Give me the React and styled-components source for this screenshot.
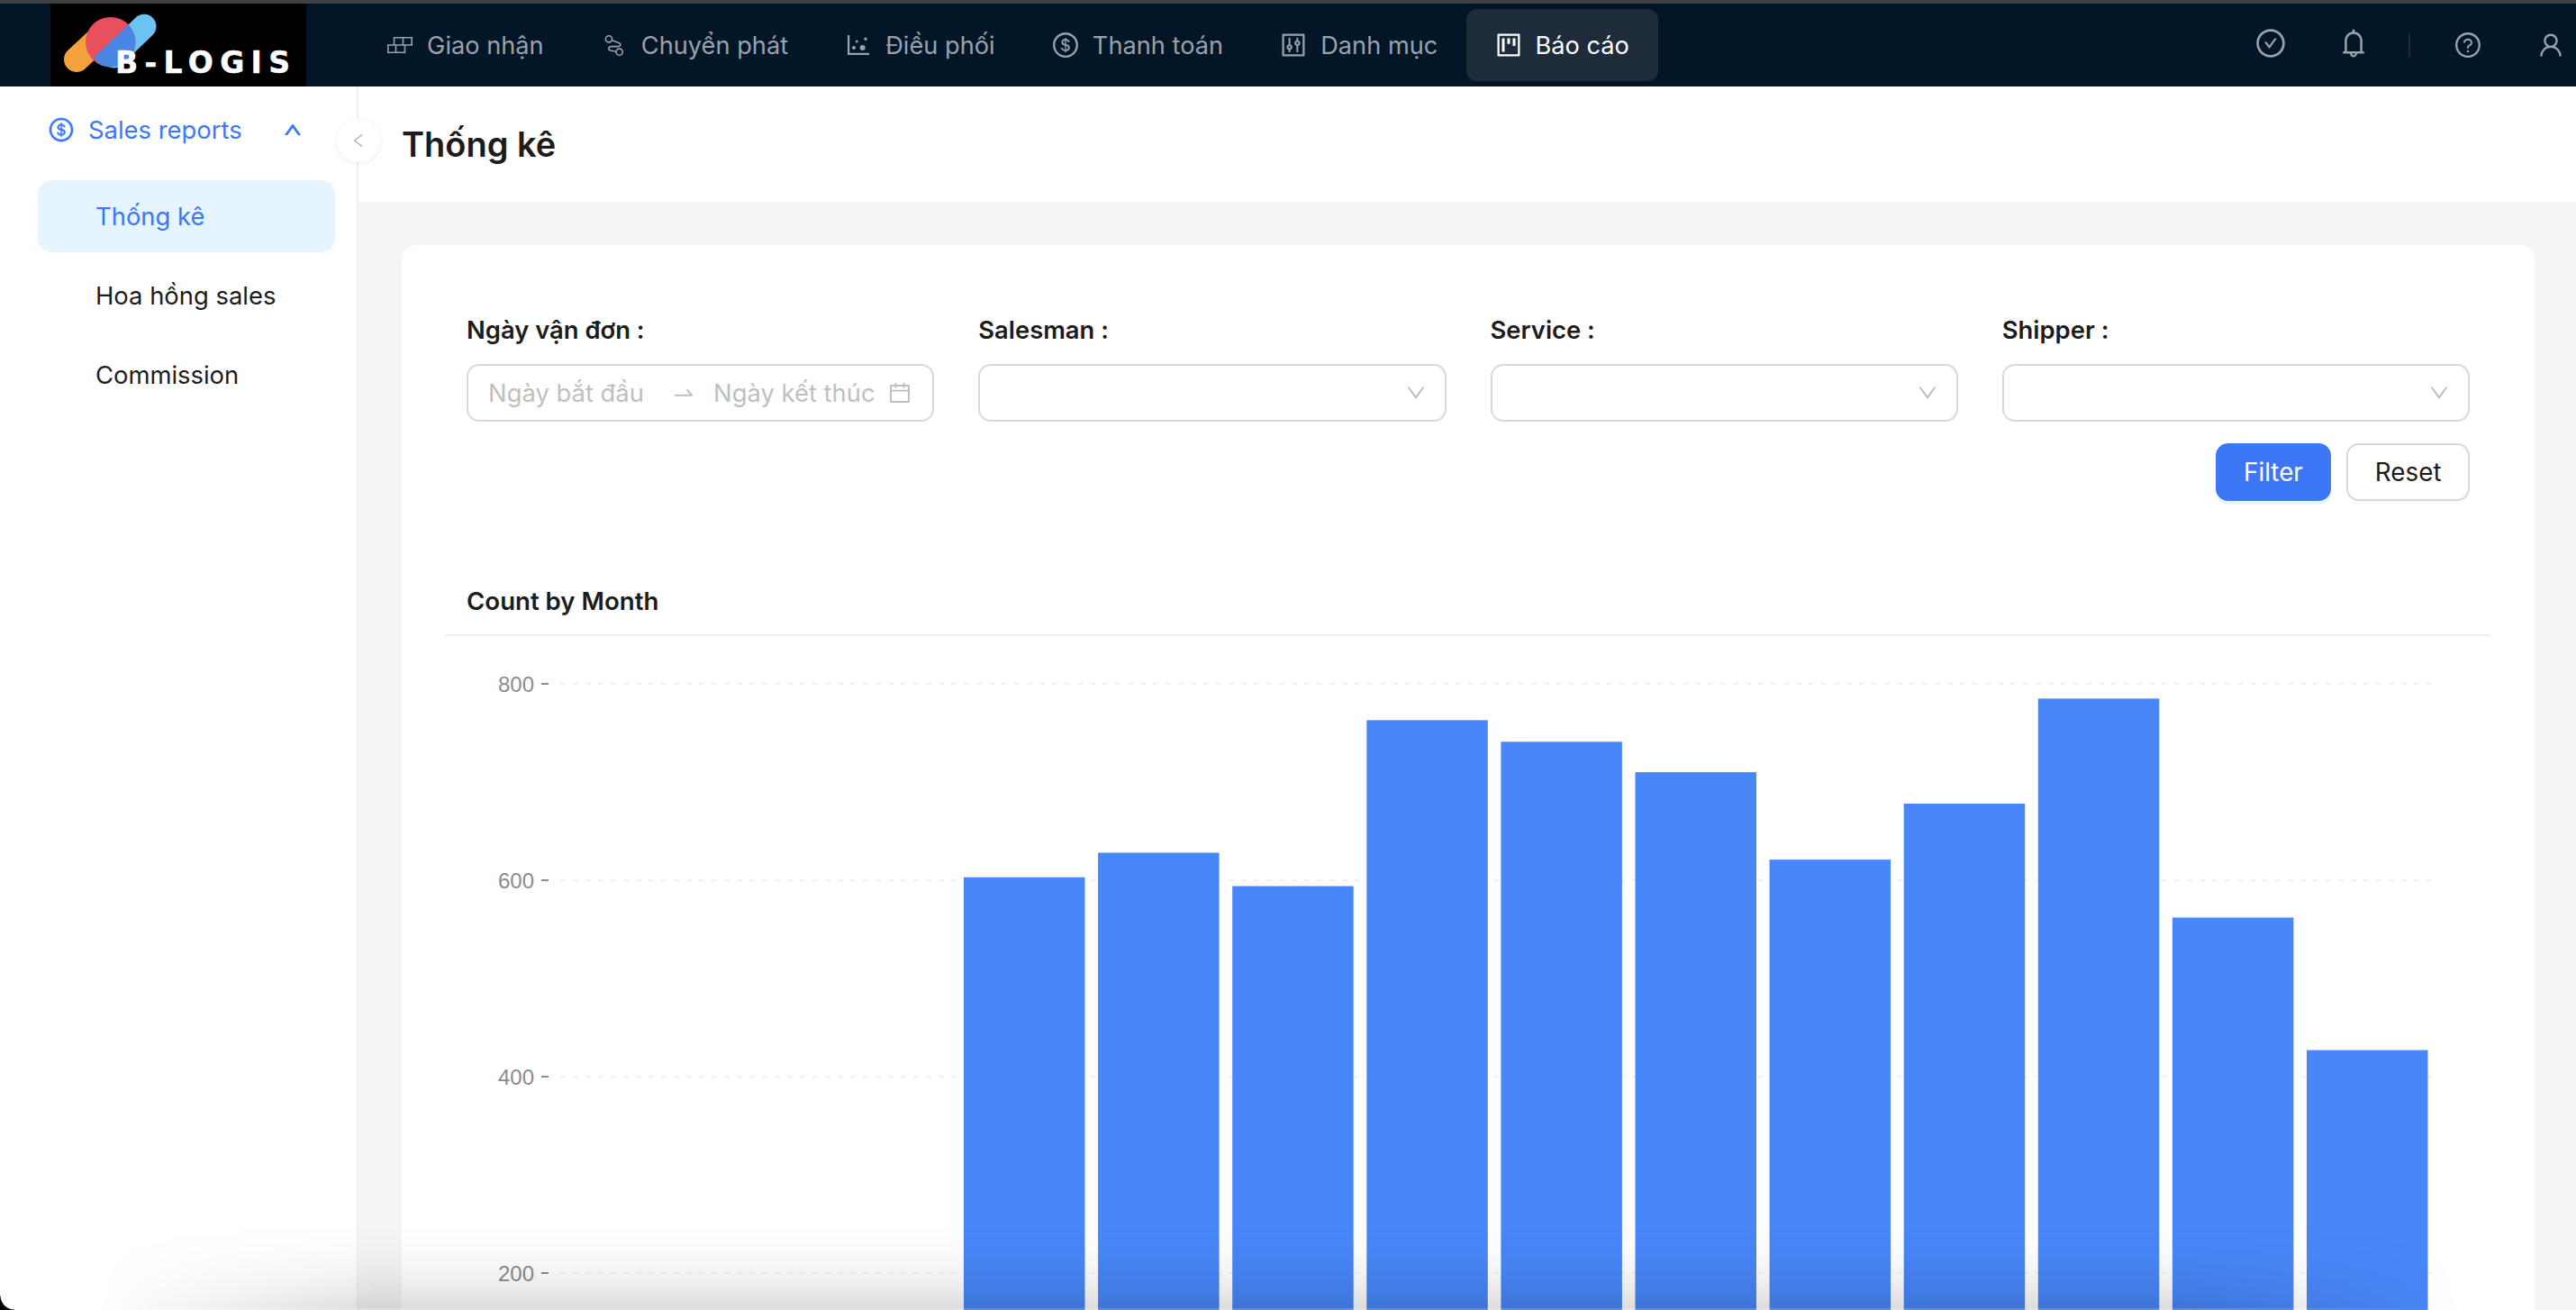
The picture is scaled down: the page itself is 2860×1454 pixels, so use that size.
import React from 'react';
import styled, { createGlobalStyle } from 'styled-components';
import {
  AiOutlineDotChart,
  AiOutlineDollar,
  AiOutlineControl,
  AiOutlineProject,
  AiOutlineCheckCircle,
  AiOutlineBell,
  AiOutlineQuestionCircle,
  AiOutlineUser,
  AiOutlineUp,
  AiOutlineLeft,
  AiOutlineDown,
  AiOutlineCalendar,
  AiOutlineSwapRight,
} from 'react-icons/ai';

const GlobalStyle = createGlobalStyle`
  html, body {
    margin: 0;
    padding: 0;
    height: 100%;
    overflow: hidden;
    background: #fff;
    font-family: Inter, "Noto Sans", sans-serif;
  }
  * { box-sizing: border-box; }
`;

const Page = styled.div`
  position: relative;
  display: flex;
  flex-direction: column;
  height: 1454px;
  overflow: hidden;
`;

const TopStrip = styled.div`
  height: 4px;
  flex: none;
  background: #3f4143;
`;

// Top navigation
const Header = styled.header`
  display: flex;
  align-items: center;
  flex: none;
  height: 92px;
  padding: 0 12px 0 56px;
  background: #031628;
`;

const LogoBox = styled.div`
  width: 284px;
  height: 92px;
  flex: none;
  margin-right: 58px;
  background: #000;

  svg { display: block; }
`;

const NavItem = styled.div`
  display: flex;
  align-items: center;
  gap: 16px;
  height: 80px;
  padding: 0 32.1px;
  border-radius: 12px;
  font-size: 27.2px;
  color: ${props => (props.$active ? '#fff' : '#9aa1ab')};
  background: ${props => (props.$active ? '#1e2b3b' : 'transparent')};
`;

const NavIcon = styled.span`
  display: flex;
  align-items: center;
  justify-content: center;
  width: 28px;
  height: 28px;
  font-size: 32px;

  svg { flex: none; }
`;

const RightIcons = styled.div`
  display: flex;
  align-items: center;
  margin-left: auto;
`;

const TopIcon = styled.span`
  display: flex;
  color: #9aa1ab;
  font-size: ${props => props.$size}px;
  margin-left: ${props => props.$gap}px;
  margin-bottom: ${props => props.$lift || 0}px;
`;

const HeaderDivider = styled.span`
  width: 2px;
  height: 26px;
  margin: 0 48px 0 43px;
  background: #1c2a3a;
`;

// Left menu
const Body = styled.div`
  display: flex;
  flex: 1;
  min-height: 0;
`;

const Sidebar = styled.aside`
  position: relative;
  flex: none;
  width: 398px;
  padding: 8px 24px 0 42px;
  border-right: 2px solid #f0f0f0;
  background: #fff;
`;

const SubMenuTitle = styled.div`
  display: flex;
  align-items: center;
  height: 80px;
  padding: 0 36px 0 12px;
  margin-bottom: 16px;
  font-size: 27.4px;
  color: #3c77f7;

  span { margin-left: 15px; }
  svg:last-child { margin-left: auto; font-size: 22px; stroke: currentColor; stroke-width: 50; }
  svg:first-child { font-size: 30px; margin-left: -1px; stroke: currentColor; stroke-width: 16; }
`;

const MenuItem = styled.div`
  display: flex;
  align-items: center;
  height: 80px;
  margin-bottom: 8px;
  padding-left: 64px;
  border-radius: 16px;
  font-size: 27.4px;
  color: ${props => (props.$active ? '#3c77f7' : '#1c1c1c')};
  background: ${props => (props.$active ? '#e6f4ff' : 'transparent')};
`;

const CollapseButton = styled.button`
  position: absolute;
  top: 36px;
  right: -26px;
  display: flex;
  align-items: center;
  justify-content: center;
  width: 48px;
  height: 48px;
  padding: 0;
  border: none;
  border-radius: 50%;
  background: #fff;
  color: #b8b8b8;
  font-size: 20px;
  box-shadow: 0 1px 6px rgba(0, 0, 0, 0.08);
`;

// Main area
const Main = styled.main`
  display: flex;
  flex-direction: column;
  flex: 1;
  min-width: 0;
  background: #f5f5f5;
`;

const TitleBar = styled.div`
  display: flex;
  align-items: center;
  flex: none;
  height: 128px;
  padding: 0 48px;
  background: #fff;
`;

const Title = styled.h1`
  margin: 0;
  font-size: 38px;
  font-weight: 600;
  color: #1c1c1c;
`;

const Content = styled.div`
  flex: 1;
  padding: 48px 46px 0 48px;
`;

const Card = styled.section`
  height: 100%;
  padding: 72px 72px 0;
  border-radius: 16px 16px 0 0;
  background: #fff;
  overflow: hidden;
`;

const FilterGrid = styled.div`
  display: grid;
  grid-template-columns: repeat(4, 1fr);
  column-gap: 49px;
`;

const Field = styled.div`
  display: flex;
  flex-direction: column;
`;

const Label = styled.label`
  height: 44px;
  margin-bottom: 16px;
  font-size: 27.4px;
  font-weight: 600;
  line-height: 44px;
  color: #1c1c1c;
`;

const InputBox = styled.div`
  display: flex;
  align-items: center;
  height: 64px;
  padding: 0 ${props => props.$right || 19}px 0 22px;
  border: 2px solid #d9d9d9;
  border-radius: 14px;
  background: #fff;
  color: #bfbfbf;
  font-size: 27.4px;
`;

const Placeholder = styled.span`
  width: 172px;
  white-space: nowrap;
  color: #bfbfbf;
`;

const RangeArrow = styled.span`
  display: flex;
  margin: 0 19px 0 31px;
  font-size: 28px;
`;

const FieldIcon = styled.span`
  display: flex;
  margin-left: auto;
  font-size: ${props => props.$size || 28}px;
`;

const ButtonRow = styled.div`
  display: flex;
  justify-content: flex-end;
  gap: 17px;
  margin-top: 24px;
`;

const Button = styled.button`
  height: 64px;
  padding: 0 ${props => (props.$primary ? 31.5 : 29.5)}px;
  border: ${props => (props.$primary ? 'none' : '2px solid #d9d9d9')};
  border-radius: 14px;
  font-family: inherit;
  font-size: 27.8px;
  color: ${props => (props.$primary ? '#fff' : '#1c1c1c')};
  background: ${props => (props.$primary ? '#3c77f7' : '#fff')};
  box-shadow: 0 4px 0 ${props => (props.$primary ? 'rgba(5, 145, 255, 0.1)' : 'rgba(0, 0, 0, 0.02)')};
`;

const ChartHead = styled.div`
  height: 76px;
  margin: 74px -24px 0;
  padding: 0 24px;
  border-bottom: 2px solid #f0f0f0;
  font-size: 27.6px;
  font-weight: 600;
  line-height: 74px;
  color: #1c1c1c;
`;

const ChartArea = styled.div`
  margin: 0 -24px;
  svg { display: block; }
`;

// Screenshot edge of the window
const WindowShadow = styled.div`
  position: absolute;
  left: 0;
  right: 0;
  bottom: 0;
  height: 95px;
  pointer-events: none;
  background: linear-gradient(
    to top,
    rgba(0, 0, 0, 0.14),
    rgba(0, 0, 0, 0.09) 20%,
    rgba(0, 0, 0, 0.04) 48%,
    rgba(0, 0, 0, 0.012) 75%,
    rgba(0, 0, 0, 0)
  );
  mask-image: linear-gradient(to right, transparent 110px, #000 420px, #000 2420px, transparent 2730px);

  &::after {
    content: '';
    position: absolute;
    left: 0;
    right: 0;
    bottom: 0;
    height: 2px;
    background: rgba(255, 255, 255, 0.18);
  }
`;

const WindowCorner = styled.div`
  position: absolute;
  left: 0;
  bottom: 0;
  width: 16px;
  height: 16px;
  pointer-events: none;
  background: radial-gradient(circle at 100% 0, transparent 15px, #000 16px);
`;

function BuildIcon() {
  return (
    <svg width="28" height="18" viewBox="0 0 28 18" fill="none" stroke="currentColor" strokeWidth="1.6">
      <path d="M7.5 9V.8h19.7V9H.8v8.2h18.7V9M17.5.8V9M9.5 9v8.2" />
    </svg>
  );
}

function RouteIcon() {
  return (
    <svg width="28" height="28" viewBox="0 0 28 28" fill="none" stroke="currentColor" strokeWidth="1.6">
      <circle cx="8" cy="7.3" r="3.6" />
      <circle cx="19.7" cy="21.7" r="3.6" />
      <path d="M11.3 8.8 19 11.4c3 1.2 2.2 4.2-.8 4.2h-7.4c-3.5 0-3.9 3.6-1 4.4l6.3 1.3" />
    </svg>
  );
}

function Logo() {
  return (
    <svg width="284" height="92" viewBox="0 0 284 92">
      <defs>
        <clipPath id="logoDisc">
          <circle cx="66.7" cy="42.7" r="27.7" />
        </clipPath>
      </defs>
      <line x1="29" y1="62" x2="57" y2="36" stroke="#f2a13c" strokeWidth="28" strokeLinecap="round" />
      <line x1="104" y1="25.3" x2="70" y2="58" stroke="#6cc3f2" strokeWidth="27" strokeLinecap="round" />
      <circle cx="66.7" cy="42.7" r="27.7" fill="#e8505d" />
      <line
        x1="104"
        y1="25.3"
        x2="57"
        y2="70"
        stroke="#4985e3"
        strokeWidth="27"
        strokeLinecap="butt"
        clipPath="url(#logoDisc)"
      />
      <text
        x="72"
        y="77"
        fontFamily="DejaVu Sans, sans-serif"
        fontWeight="700"
        fontSize="33"
        fill="#fff"
        stroke="#fff"
        strokeWidth="0.5"
        textLength="194"
        lengthAdjust="spacing"
      >
        B-LOGIS
      </text>
    </svg>
  );
}

const navItems = [
  { label: 'Giao nhận', icon: <BuildIcon /> },
  { label: 'Chuyển phát', icon: <RouteIcon /> },
  { label: 'Điều phối', icon: <AiOutlineDotChart /> },
  { label: 'Thanh toán', icon: <AiOutlineDollar /> },
  { label: 'Danh mục', icon: <AiOutlineControl /> },
  { label: 'Báo cáo', icon: <AiOutlineProject />, active: true },
];

const selectFields = ['Salesman', 'Service', 'Shipper'];

const monthCounts = [603, 628, 594, 763, 741, 710, 621, 678, 785, 562, 427];
const ticks = [800, 600, 400, 200];

const CHART_BASE = 925;
const UNIT = 1.09;

function CountChart() {
  return (
    <svg width="2272" height="760" viewBox="0 0 2272 760">
      {ticks.map(tick => {
        const y = CHART_BASE - tick * UNIT;
        return (
          <g key={tick}>
            <text
              x="99"
              y={y + 8.5}
              textAnchor="end"
              fontFamily="Liberation Sans, sans-serif"
              fontSize="24"
              fill="#8c8c8c"
            >
              {tick}
            </text>
            <line x1="107" x2="115" y1={y} y2={y} stroke="#8c8c8c" strokeWidth="2" />
            <line x1="128" x2="2206" y1={y} y2={y} stroke="#f1f1f1" strokeWidth="2" strokeDasharray="6 8" />
          </g>
        );
      })}
      {monthCounts.map((count, i) => (
        <rect
          key={i}
          x={576 + i * 149.1}
          y={CHART_BASE - count * UNIT}
          width="134.5"
          height={count * UNIT}
          fill="#4887f9"
        />
      ))}
    </svg>
  );
}

export default function App() {
  return (
    <Page>
      <GlobalStyle />
      <TopStrip />
      <Header>
        <LogoBox>
          <Logo />
        </LogoBox>
        {navItems.map(item => (
          <NavItem key={item.label} $active={item.active}>
            <NavIcon>{item.icon}</NavIcon>
            {item.label}
          </NavItem>
        ))}
        <RightIcons>
          <TopIcon $size={36} $lift={5}><AiOutlineCheckCircle /></TopIcon>
          <TopIcon $size={36} $gap={56} $lift={5}><AiOutlineBell /></TopIcon>
          <HeaderDivider />
          <TopIcon $size={32}><AiOutlineQuestionCircle /></TopIcon>
          <TopIcon $size={32} $gap={60}><AiOutlineUser /></TopIcon>
        </RightIcons>
      </Header>
      <Body>
        <Sidebar>
          <SubMenuTitle>
            <AiOutlineDollar />
            <span>Sales reports</span>
            <AiOutlineUp />
          </SubMenuTitle>
          <MenuItem $active>Thống kê</MenuItem>
          <MenuItem>Hoa hồng sales</MenuItem>
          <MenuItem>Commission</MenuItem>
          <CollapseButton><AiOutlineLeft /></CollapseButton>
        </Sidebar>
        <Main>
          <TitleBar>
            <Title>Thống kê</Title>
          </TitleBar>
          <Content>
            <Card>
              <FilterGrid>
                <Field>
                  <Label>Ngày vận đơn :</Label>
                  <InputBox $right={22}>
                    <Placeholder>Ngày bắt đầu</Placeholder>
                    <RangeArrow><AiOutlineSwapRight /></RangeArrow>
                    <Placeholder>Ngày kết thúc</Placeholder>
                    <FieldIcon><AiOutlineCalendar /></FieldIcon>
                  </InputBox>
                </Field>
                {selectFields.map(name => (
                  <Field key={name}>
                    <Label>{name} :</Label>
                    <InputBox>
                      <FieldIcon $size={26}><AiOutlineDown /></FieldIcon>
                    </InputBox>
                  </Field>
                ))}
              </FilterGrid>
              <ButtonRow>
                <Button $primary>Filter</Button>
                <Button>Reset</Button>
              </ButtonRow>
              <ChartHead>Count by Month</ChartHead>
              <ChartArea>
                <CountChart />
              </ChartArea>
            </Card>
          </Content>
        </Main>
      </Body>
      <WindowShadow />
      <WindowCorner />
    </Page>
  );
}
